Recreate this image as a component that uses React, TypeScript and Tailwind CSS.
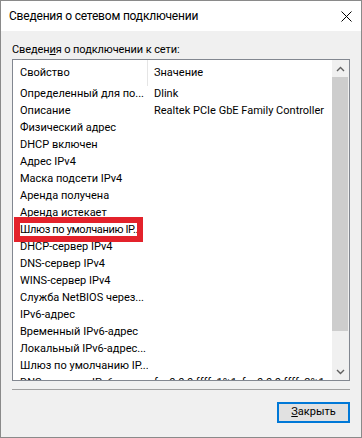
import React from "react";

const rows: [string, string][] = [
  ["Определенный для по...", "Dlink"],
  ["Описание", "Realtek PCIe GbE Family Controller"],
  ["Физический адрес", ""],
  ["DHCP включен", ""],
  ["Адрес IPv4", ""],
  ["Маска подсети IPv4", ""],
  ["Аренда получена", ""],
  ["Аренда истекает", ""],
  ["Шлюз по умолчанию IP...", ""],
  ["DHCP-сервер IPv4", ""],
  ["DNS-сервер IPv4", ""],
  ["WINS-сервер IPv4", ""],
  ["Служба NetBIOS через...", ""],
  ["IPv6-адрес", ""],
  ["Временный IPv6-адрес", ""],
  ["Локальный IPv6-адрес...", ""],
  ["Шлюз по умолчанию IP...", ""],
  ["DNS-серверы IPv6", "fec0:0:0:ffff::1%1, fec0:0:0:ffff::2%1"],
];

function Chevron({ up }: { up?: boolean }) {
  return (
    <svg width="9" height="6" viewBox="0 0 9 6">
      <path
        d={up ? "M1 5 L4.5 1.5 L8 5" : "M1 1 L4.5 4.5 L8 1"}
        fill="none"
        stroke="#606060"
        strokeWidth="1.4"
      />
    </svg>
  );
}

export default function App() {
  return (
    <div className="w-[362px] h-[438px] bg-[#f0f0f0] border border-[#8a8a8a] flex flex-col font-[Roboto,sans-serif] text-black overflow-hidden">
      <div className="h-[30px] bg-white flex items-center justify-between pl-[8px] pr-[9px] shrink-0">
        <span className="text-[12px] leading-[15px] tracking-[-0.2px]">Сведения о сетевом подключении</span>
        <svg width="11" height="11" viewBox="0 0 11 11">
          <path d="M0.5 0.5 L10.5 10.5 M10.5 0.5 L0.5 10.5" stroke="#000" strokeWidth="1" />
        </svg>
      </div>
      <div className="flex flex-col px-[11px]">
        <div className="mt-[11px] text-[11px] leading-[15px] h-[15px] tracking-[-0.1px]">
          Сведен<span className="underline">и</span>я о подключении к сети:
        </div>
        <div className="mt-[2px] h-[322px] border border-[#828790] bg-white flex">
          <div className="relative flex-1 overflow-hidden text-[11px]">
            <div className="h-[26px] flex">
              <div className="w-[135px] pl-[7px] border-r border-[#e5e5e5] flex items-center">Свойство</div>
              <div className="pl-[6px] flex items-center">Значение</div>
            </div>
            {rows.map(([k, v], i) => (
              <div key={i} className="h-[17px] flex items-center whitespace-nowrap">
                <div className={i === 8 ? "w-[135px] pl-[7px] overflow-hidden tracking-[-0.35px]" : "w-[135px] pl-[7px] overflow-hidden"}>
                  {k}
                </div>
                <div className="pl-[6px]">{v}</div>
              </div>
            ))}
            <div className="absolute left-[1px] top-[157px] w-[129px] h-[25px] border-[6px] border-[#e3222b]" />
          </div>
          <div className="w-[17px] bg-[#f0f0f0] flex flex-col">
            <div className="h-[17px] flex items-center justify-center">
              <Chevron up />
            </div>
            <div className="h-[254px] bg-[#cdcdcd] mr-[1px]" />
            <div className="flex-1" />
            <div className="h-[17px] flex items-center justify-center">
              <Chevron />
            </div>
          </div>
        </div>
        <div className="mt-[8px] h-[1px] bg-[#a0a0a0]" />
        <div className="flex justify-end mt-[12px]">
          <div className="w-[73px] h-[21px] border-2 border-[#0078d7] bg-[#e1e1e1] text-[11px] flex items-center justify-center">
            <span>
              <span className="underline">З</span>акрыть
            </span>
          </div>
        </div>
      </div>
    </div>
  );
}
